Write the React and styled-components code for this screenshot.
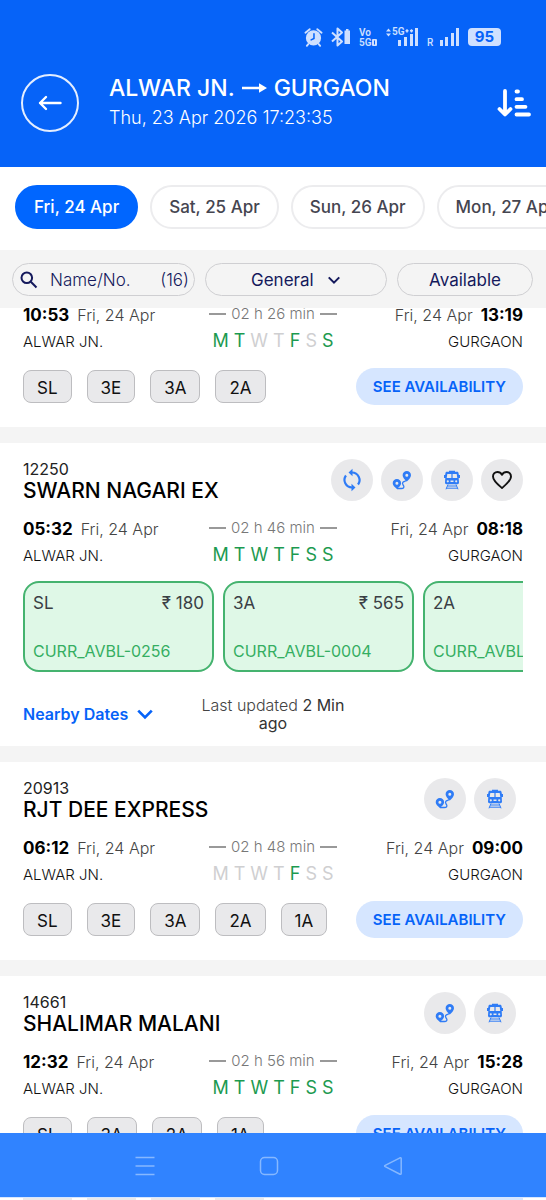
import React from 'react'
import styled, { createGlobalStyle } from 'styled-components';

const week = ['M', 'T', 'W', 'T', 'F', 'S', 'S']

const dates = ['Fri, 24 Apr', 'Sat, 25 Apr', 'Sun, 26 Apr', 'Mon, 27 Apr']

const trains = [
  { id: 'first', partial: true, from: '10:53', to: '13:19', duration: '02 h 26 min', runs: '1100101', classes: ['SL', '3E', '3A', '2A'] },
  {
    id: '12250', number: '12250', name: 'SWARN NAGARI EX', from: '05:32', to: '08:18', duration: '02 h 46 min', runs: '1111111',
    fares: [
      { code: 'SL', price: '₹ 180', status: 'CURR_AVBL-0256' },
      { code: '3A', price: '₹ 565', status: 'CURR_AVBL-0004' },
      { code: '2A', price: '', status: 'CURR_AVBL' },
    ],
  },
  { id: '20913', number: '20913', name: 'RJT DEE EXPRESS', from: '06:12', to: '09:00', duration: '02 h 48 min', runs: '0000100', classes: ['SL', '3E', '3A', '2A', '1A'] },
  { id: '14661', number: '14661', name: 'SHALIMAR MALANI', from: '12:32', to: '15:28', duration: '02 h 56 min', runs: '1111111', classes: ['SL', '3A', '2A', '1A'] },
]

function StatusIcons() {
  return (
    <StatusBar>
      <svg width="19" height="22" viewBox="0 0 20 22" fill="none">
        <circle cx="10" cy="12" r="8" fill="#cfe0ff" />
        <path d="M1.500 6.500 6 2.800M18.500 6.500 14 2.800M4.500 18.500 3 20.300M15.500 18.500 17 20.300" stroke="#cfe0ff" strokeWidth="2" strokeLinecap="round" />
        <path d="M10.500 7.500V12.500L7.500 14" stroke="#0663f8" strokeWidth="1.600" strokeLinecap="round" />
      </svg>
      <svg width="20" height="22" viewBox="0 0 20 22" fill="none">
        <path d="M1 6.500 11 15.500 6.500 19.500V2.500L11 6.500 1 15.500" stroke="#cfe0ff" strokeWidth="2" strokeLinejoin="round" />
        <path d="M15 3h2.500v1.500H19V18h-5.500V4.500H15z" fill="#cfe0ff" />
      </svg>
      <svg width="19" height="22" viewBox="0 0 19 22" fill="#cfe0ff">
        <text x="0" y="10" fontSize="10" fontWeight="600" fontFamily="Roboto, sans-serif">Vo</text>
        <text x="0" y="20" fontSize="10" fontWeight="600" fontFamily="Roboto, sans-serif">5G</text>
        <rect x="13" y="13" width="5" height="7" rx="1" />
        <path d="M15.500 14.500v4" stroke="#0663f8" strokeWidth="1" />
      </svg>
      <svg width="33" height="22" viewBox="0 0 33 22" fill="#cfe0ff">
        <path d="M0 5.500 2.500 2.500 5 5.500zM0 7.500 2.500 10.500 5 7.500z" />
        <text x="6" y="9" fontSize="10" fontWeight="600" fontFamily="Roboto, sans-serif">5G</text>
        <path d="M19.500 4h3v1.500h-3zM20.250 3.200h1.500v3.200h-1.500zM24 4h3v1.500h-3zM24.750 3.200h1.500v3.200h-1.500z" />
        <path d="M12 14h3v6h-3zM18 11h3v9h-3zM24 8h3v12h-3zM29 2h3v18h-3z" />
      </svg>
      <svg width="33" height="22" viewBox="0 0 33 22" fill="#cfe0ff">
        <text x="0" y="20" fontSize="10" fontWeight="500" fontFamily="Roboto, sans-serif">R</text>
        <path d="M13 14h3v6h-3zM18 11h3v9h-3zM24 7h3v13h-3zM29 2h3v18h-3z" />
      </svg>
      <Battery>95</Battery>
    </StatusBar>
  )
}

function RefreshIcon() {
  return (
    <svg width="22" height="24" viewBox="0 0 22 24" fill="none" stroke="#2f7cf6" strokeWidth="2.200">
      <path d="M11 4.500a7.500 7.500 0 0 1 6 12M11 19.500a7.500 7.500 0 0 1-6-12" />
      <path d="M11.500.8V8.200L7.500 4.500zM10.500 15.800V23.200L14.500 19.500z" fill="#2f7cf6" stroke="none" />
    </svg>
  )
}

function RouteIcon() {
  return (
    <svg width="20" height="20" viewBox="0 0 20 20" fill="none">
      <path d="M5 18.500h4.500c2 0 2.800-1.200 2.200-2.500s-1.900-2.500-.9-3.700 4-.8 4-2.800" stroke="#2f7cf6" strokeWidth="1.300" />
      <path fillRule="evenodd" fill="#2f7cf6" d="M14.800 1a4.200 4.200 0 0 1 4.200 4.200c0 2-2 4.300-4.200 6.300-2.200-2-4.200-4.300-4.200-6.300A4.200 4.200 0 0 1 14.800 1zm0 2.700a1.500 1.500 0 1 0 0 3 1.500 1.500 0 0 0 0-3zM4.900 9a4.200 4.200 0 0 1 4.200 4.200c0 2-2 3.800-4.200 5.800-2.200-2-4.200-3.800-4.200-5.800A4.200 4.200 0 0 1 4.900 9zm0 2.700a1.500 1.500 0 1 0 0 3 1.500 1.500 0 0 0 0-3z" />
    </svg>
  )
}

function TrainIcon() {
  return (
    <svg width="18" height="20" viewBox="0 0 18 20">
      <path fill="#2f7cf6" fillRule="evenodd" d="M6 .8h6v1h2c.9 0 1.400.4 1.500 1.200l.4 2H17v3h-1.300l.3 4.500c0 1.200-.6 1.700-1.500 1.700h-11c-.9 0-1.500-.5-1.500-1.700L2.300 8H1V5h1.100l.4-2c.1-.8.6-1.200 1.500-1.200h2zM4.300 4l-.6 4h4.700V4zm5.300 0v4h4.700l-.6-4zM4.800 10.200a1.100 1.100 0 1 0 0 2.200 1.100 1.100 0 0 0 0-2.200zm8.400 0a1.100 1.100 0 1 0 0 2.200 1.100 1.100 0 0 0 0-2.200zM7.500 10.500v1.500h3v-1.500z" />
      <path d="M5 14.500 3 19.300M13 14.500 15 19.300M4.500 16h9M3.500 18.200h11" stroke="#2f7cf6" strokeWidth="1" />
    </svg>
  )
}

function HeartIcon() {
  return (
    <svg width="22" height="22" viewBox="0 0 22 22" fill="none" stroke="#111" strokeWidth="1.900" strokeLinejoin="round">
      <path d="M11 19C6.500 15.200 2 11.800 2 7.500 2 4.800 4 3 6.400 3c1.900 0 3.600 1 4.600 2.800C12 4 13.700 3 15.600 3 18 3 20 4.800 20 7.500c0 4.300-4.500 7.700-9 11.500z" />
    </svg>
  )
}

function Chevron({ size, color }) {
  return (
    <svg width={size} height={size} viewBox="0 0 16 16" fill="none" stroke={color} strokeWidth="2.400">
      <path d="M2 5 8 11 14 5" />
    </svg>
  )
}

function Train({ train }) {
  return (
    <Card $partial={train.partial}>
      {!train.partial && (
        <CardHead>
          <div>
            <TrainNumber>{train.number}</TrainNumber>
            <TrainName>{train.name}</TrainName>
          </div>
          <Tools $inset={!train.fares}>
            {train.fares && <RoundButton aria-label="Refresh"><RefreshIcon /></RoundButton>}
            <RoundButton aria-label="Route"><RouteIcon /></RoundButton>
            <RoundButton aria-label="Live status"><TrainIcon /></RoundButton>
            {train.fares && <RoundButton aria-label="Save"><HeartIcon /></RoundButton>}
          </Tools>
        </CardHead>
      )}
      <Trip>
        <Stop>
          <When><Time>{train.from}</Time><Day>Fri, 24 Apr</Day></When>
          <Station>ALWAR JN.</Station>
        </Stop>
        <Middle>
          <Duration>{train.duration}</Duration>
          <Week>
            {week.map((d, i) => <WeekDay key={i} $on={train.runs[i] === '1'}>{d}</WeekDay>)}
          </Week>
        </Middle>
        <Stop $end>
          <When><Day>Fri, 24 Apr</Day><Time>{train.to}</Time></When>
          <Station>GURGAON</Station>
        </Stop>
      </Trip>
      {train.classes && (
        <Actions>
          <Chips>
            {train.classes.map((c) => <Chip key={c}>{c}</Chip>)}
          </Chips>
          <SeeButton>SEE AVAILABILITY</SeeButton>
        </Actions>
      )}
      {train.fares && (
        <>
          <Fares>
            {train.fares.map((f) => (
              <Fare key={f.code}>
                <FareTop><span>{f.code}</span><span>{f.price}</span></FareTop>
                <FareStatus>{f.status}</FareStatus>
              </Fare>
            ))}
          </Fares>
          <CardFoot>
            <Nearby>Nearby Dates <Chevron size={18} color="#0663f8" /></Nearby>
            <Updated>Last updated <b>2 Min</b> <b>ago</b></Updated>
          </CardFoot>
        </>
      )}
    </Card>
  )
}

function App() {
  return (
    <Screen>
      <GlobalStyle />
      <Header>
        <StatusIcons />
        <TitleRow>
          <BackButton aria-label="Back">
            <svg width="24" height="18" viewBox="0 0 24 18" fill="none" stroke="#fff" strokeWidth="2.400" strokeLinecap="round" strokeLinejoin="round">
              <path d="M22.500 9H2M8 3 2 9l6 6" />
            </svg>
          </BackButton>
          <Titles>
            <Title>
              ALWAR JN.
              <svg width="25" height="12" viewBox="0 0 25 12" fill="#fff">
                <path d="M0 4.800h17V1.200L25 6l-8 4.800V7.200H0z" />
              </svg>
              GURGAON
            </Title>
            <SubTitle>Thu, 23 Apr 2026 17:23:35</SubTitle>
          </Titles>
          <SortButton aria-label="Sort">
            <svg width="34" height="30" viewBox="0 0 34 30" fill="none" stroke="#fff" strokeWidth="3.800" strokeLinecap="round" strokeLinejoin="round">
              <path d="M8 3V26M2.500 21 8 26.500 13.500 21M19.500 3.500H21M19.500 11.200H25M19.500 18.800H28.500M19.500 26.500H32" />
            </svg>
          </SortButton>
        </TitleRow>
      </Header>

      <DateTabs>
        {dates.map((d, i) => <DateTab key={d} $active={i === 0}>{d}</DateTab>)}
      </DateTabs>

      <Filters>
        <SearchBox>
          <svg width="18" height="18" viewBox="0 0 18 18" fill="none" stroke="#14195c" strokeWidth="2">
            <circle cx="6.800" cy="6.800" r="5.300" />
            <path d="M10.800 10.800 16.500 16.500" />
          </svg>
          <SearchInput placeholder="Name/No." aria-label="Name/No." />
          <span>(16)</span>
        </SearchBox>
        <QuotaBox>
          <Quota aria-label="Quota" defaultValue="General">
            <option>General</option>
          </Quota>
          <Chevron size={14} color="#14195c" />
        </QuotaBox>
        <AvailableButton>Available</AvailableButton>
      </Filters>

      <List>
        {trains.map((t) => <Train key={t.id} train={t} />)}
      </List>

      <NavBar>
        <NavButton aria-label="Recent apps">
          <svg width="20" height="20" viewBox="0 0 20 20"><path d="M.5 1.500h19M.5 10h19M.5 18.500h19" /></svg>
        </NavButton>
        <NavButton aria-label="Home">
          <svg width="20" height="20" viewBox="0 0 20 20"><rect x="1.500" y="1.500" width="17" height="17" rx="4" /></svg>
        </NavButton>
        <NavButton aria-label="Go back">
          <svg width="20" height="20" viewBox="0 0 20 20"><path d="M17 1.800 2.200 9.300q-1.200.7 0 1.400L17 18.200q1.200.4 1.200-.8V2.600q0-1.200-1.200-.8z" /></svg>
        </NavButton>
      </NavBar>
      <Peek aria-hidden="true">
        <PeekChip /><PeekChip /><PeekChip /><PeekChip /><PeekPill />
      </Peek>
    </Screen>
  )
}

export default App

const GlobalStyle = createGlobalStyle`
*{
  box-sizing:border-box;
}
body{
  margin:0;
  background:#fff;
  font-family:Inter, "Liberation Sans", sans-serif;
}
button, input, select{
  font-family:inherit;
  padding:0;
  margin:0;
}
`

const Screen = styled.div`
height:100vh;
display:flex;
flex-direction:column;
overflow:hidden;
`

const Header = styled.header`
background:#0663f8;
color:#fff;
flex:none;
`
const StatusBar = styled.div`
display:flex;
justify-content:flex-end;
align-items:center;
gap:8px;
padding:26px 45px 0 0;
`
const Battery = styled.span`
background:#cfe0ff;
color:#0663f8;
width:33px;
height:18px;
line-height:18px;
border-radius:4px;
text-align:center;
font-size:15px;
font-weight:700;
`
const TitleRow = styled.div`
display:flex;
align-items:center;
padding:25px 15px 34px 21px;
`
const BackButton = styled.button`
width:58px;
height:58px;
border:2px solid #e4eeff;
border-radius:50%;
background:none;
display:flex;
align-items:center;
justify-content:center;
`
const Titles = styled.div`
flex:1;
padding-left:30px;
`
const Title = styled.h1`
display:flex;
align-items:center;
gap:7px;
margin:0;
font-size:23px;
line-height:30px;
font-weight:500;
white-space:nowrap;
`
const SubTitle = styled.p`
margin:0;
font-size:18px;
line-height:30px;
font-weight:300;
white-space:nowrap;
`
const SortButton = styled.button`
border:0;
background:none;
color:#fff;
display:flex;
`

const DateTabs = styled.nav`
display:flex;
flex:none;
gap:12px;
padding:18px 15px 21px;
overflow:hidden;
background:#fff;
`
const DateTab = styled.button`
flex:none;
height:44px;
padding:0 17px;
border-radius:22px;
border:2px solid ${(p) => (p.$active ? '#0066ff' : '#ececee')};
background:${(p) => (p.$active ? '#0066ff' : '#fff')};
color:${(p) => (p.$active ? '#fff' : '#454550')};
font-size:17px;
font-weight:500;
`

const Filters = styled.div`
display:grid;
grid-template-columns:minmax(0, 183fr) minmax(0, 182fr) minmax(0, 136fr);
gap:10px;
flex:none;
padding:13px 13px 12px 12px;
background:#f4f4f4;
color:#14195c;
`
const SearchBox = styled.label`
display:flex;
align-items:center;
height:33px;
padding:0 5px 0 7px;
border:1px solid #cfcfd2;
border-radius:17px;
font-size:17px;
font-weight:300;
`
const SearchInput = styled.input`
flex:1;
min-width:0;
padding-left:12px;
border:0;
outline:0;
background:none;
color:#14195c;
font-size:17px;
font-weight:300;
&::placeholder{
  color:#14195c;
  opacity:1;
}
`
const QuotaBox = styled.label`
display:flex;
align-items:center;
justify-content:center;
gap:13px;
height:33px;
border:1px solid #cfcfd2;
border-radius:17px;
`
const Quota = styled.select`
appearance:none;
border:0;
background:none;
color:#14195c;
font-size:17px;
font-weight:400;
`
const AvailableButton = styled.button`
height:33px;
border:1px solid #cfcfd2;
border-radius:17px;
background:none;
color:#14195c;
font-size:17px;
`

const List = styled.main`
flex:1;
min-height:0;
overflow:hidden;
display:flex;
flex-direction:column;
gap:16px;
background:#f4f4f4;
`
const Card = styled.section`
flex:none;
background:#fff;
padding:${(p) => (p.$partial ? '0 23px 22px' : '16px 23px 22px')};
margin-top:${(p) => (p.$partial ? '-5px' : '0')};
`
const CardHead = styled.div`
display:flex;
justify-content:space-between;
height:44px;
margin-bottom:14px;
`
const TrainNumber = styled.div`
font-size:16px;
line-height:20px;
color:#222;
`
const TrainName = styled.h2`
margin:0;
font-size:21px;
line-height:24px;
font-weight:500;
color:#000;
`
const Tools = styled.div`
display:flex;
gap:8px;
margin-right:${(p) => (p.$inset ? '7px' : '0')};
`
const RoundButton = styled.button`
width:42px;
height:42px;
border:0;
border-radius:50%;
background:#e9e9eb;
display:flex;
align-items:center;
justify-content:center;
`
const Trip = styled.div`
display:grid;
grid-template-columns:1fr auto 1fr;
`
const Stop = styled.div`
display:flex;
flex-direction:column;
gap:5px;
align-items:${(p) => (p.$end ? 'flex-end' : 'flex-start')};
`
const When = styled.div`
display:flex;
align-items:baseline;
gap:8px;
line-height:24px;
white-space:nowrap;
`
const Time = styled.span`
font-size:17px;
font-weight:700;
color:#000;
`
const Day = styled.span`
font-size:16px;
font-weight:300;
color:#444;
`
const Station = styled.div`
font-size:15px;
line-height:20px;
font-weight:300;
color:#111;
`
const Middle = styled.div`
display:flex;
flex-direction:column;
align-items:center;
gap:5px;
`
const Duration = styled.div`
display:flex;
align-items:center;
gap:5px;
font-size:15px;
line-height:22px;
font-weight:300;
color:#777;
&:before, &:after{
content:"";
width:17px;
height:2px;
background:#999;
}
`
const Week = styled.div`
display:flex;
gap:5px;
font-size:18px;
line-height:22px;
`
const WeekDay = styled.span`
color:${(p) => (p.$on ? '#1c9a50' : '#cfcfd1')};
`
const Actions = styled.div`
display:flex;
align-items:center;
justify-content:space-between;
margin-top:16px;
`
const Chips = styled.div`
display:flex;
gap:15px;
`
const Chip = styled.button`
height:33px;
min-width:46px;
padding:2px 13px 0;
border:1px solid #bdbdc0;
border-radius:8px;
background:#e9e9eb;
color:#111;
font-size:17px;
`
const SeeButton = styled.button`
height:37px;
padding:0 17px;
border:0;
border-radius:19px;
background:#d6e6ff;
color:#0663f8;
font-size:15px;
font-weight:600;
white-space:nowrap;
`
const Fares = styled.div`
display:flex;
gap:9px;
margin-top:15px;
overflow:hidden;
`
const Fare = styled.div`
flex:none;
width:191px;
height:91px;
display:flex;
flex-direction:column;
justify-content:space-between;
padding:10px 8px 9px;
border:2px solid #45b36f;
border-radius:16px;
background:#dff8e7;
font-size:16px;
line-height:20px;
`
const FareTop = styled.div`
display:flex;
justify-content:space-between;
font-size:17px;
color:#3a3f45;
`
const FareStatus = styled.div`
color:#35ae62;
`
const CardFoot = styled.div`
display:grid;
grid-template-columns:1fr 160px 1fr;
align-items:center;
margin-top:24px;
margin-bottom:-8px;
`
const Nearby = styled.button`
display:flex;
align-items:center;
gap:8px;
border:0;
background:none;
color:#0663f8;
font-size:16px;
font-weight:600;
white-space:nowrap;
`
const Updated = styled.div`
text-align:center;
font-size:16px;
line-height:18px;
font-weight:300;
color:#444;
b{
  font-weight:400;
  color:#333;
}
`

const NavBar = styled.nav`
display:flex;
align-items:center;
justify-content:center;
gap:100px;
flex:none;
height:64px;
padding-top:2px;
padding-right:9px;
background:#3083ff;
`
const NavButton = styled.button`
width:24px;
height:24px;
border:0;
background:none;
display:flex;
align-items:center;
justify-content:center;
svg{
  fill:none;
  stroke:#86b8ff;
  stroke-width:1.5;
}
`
const Peek = styled.div`
display:flex;
flex:none;
gap:15px;
height:3px;
padding:0 23px;
border-top:1px solid #d6e6ff;
`
const PeekChip = styled.span`
width:49px;
background:#e9e9eb;
`
const PeekPill = styled.span`
width:163px;
margin-left:auto;
background:#d6e6ff;
`
